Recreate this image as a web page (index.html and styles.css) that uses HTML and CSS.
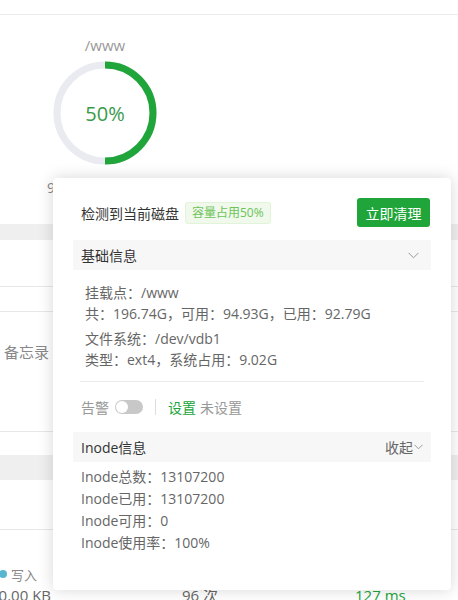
FILE: index.html
```html
<!DOCTYPE html>
<html lang="zh-CN">
<head>
<meta charset="utf-8">
<title>磁盘详情</title>
<link rel="stylesheet" href="styles.css">
</head>
<body>
<div class="page">
  <div class="topbar"></div>
  <div class="chart">
    <div class="chart-title">/www</div>
    <div class="ring">
      <svg width="110" height="110" viewBox="0 0 110 110">
        <circle cx="55" cy="55" r="48" fill="none" stroke="#eaebf1" stroke-width="7"/>
        <path d="M55 7 A48 48 0 0 1 55 103" fill="none" stroke="#20a53a" stroke-width="7"/>
      </svg>
      <span class="ring-label">50%</span>
    </div>
    <div class="chart-sub">92.79G / 196.74G</div>
  </div>
  <div class="band"></div>
  <div class="row row-a"></div>
  <div class="row row-b"></div>
  <div class="row row-c"><span class="memo">备忘录</span></div>
  <div class="row row-d"></div>
  <div class="band band-2"></div>
  <div class="row row-e"></div>
  <div class="stats">
    <div class="legend"><span class="dot"></span>写入</div>
    <div class="stat-values">
      <span class="v1">20.00 KB</span>
      <span class="v2">96 次</span>
      <span class="v3">127 ms</span>
    </div>
  </div>
</div>

<div class="popup">
  <div class="pop-head">
    <div class="pop-title">
      <span class="title-text">检测到当前磁盘</span>
      <span class="tag">容量占用50%</span>
    </div>
    <button class="btn">立即清理</button>
  </div>

  <div class="bar">
    <span>基础信息</span>
    <svg class="chev" width="11" height="7" viewBox="0 0 11 7"><path d="M0.5 0.8 L5.5 5.8 L10.5 0.8" fill="none" stroke="#999" stroke-width="1"/></svg>
  </div>
  <div class="info">
    <div class="group">
      <div>挂载点：/www</div>
      <div>共：196.74G，可用：94.93G，已用：92.79G</div>
    </div>
    <div class="group">
      <div>文件系统：/dev/vdb1</div>
      <div>类型：ext4，系统占用：9.02G</div>
    </div>
  </div>
  <div class="divider"></div>
  <div class="alert">
    <span class="muted">告警</span>
    <span class="toggle"><span class="knob"></span></span>
    <span class="vline"></span>
    <span class="link">设置</span>
    <span class="muted">未设置</span>
  </div>
  <div class="bar">
    <span>Inode信息</span>
    <span class="collapse">收起<svg class="chev-s" width="9" height="6" viewBox="0 0 9 6"><path d="M0.5 0.8 L4.5 4.8 L8.5 0.8" fill="none" stroke="#999" stroke-width="1"/></svg></span>
  </div>
  <div class="inode">
    <div>Inode总数：13107200</div>
    <div>Inode已用：13107200</div>
    <div>Inode可用：0</div>
    <div>Inode使用率：100%</div>
  </div>
</div>
</body>
</html>
```

FILE: styles.css
```css
html, body {
  margin: 0;
  padding: 0;
  background: #fff;
}
body {
  width: 458px;
  height: 600px;
  overflow: hidden;
  position: relative;
  font-family: "Open Sans", "Noto Sans CJK SC", sans-serif;
  font-size: 14px;
  color: #666;
}
.page {
  display: flex;
  flex-direction: column;
}
.topbar {
  height: 14px;
  border-bottom: 1px solid #ececec;
}
.chart {
  height: 209px;
  width: 210px;
  display: flex;
  flex-direction: column;
  align-items: center;
}
.chart-title {
  margin-top: 20px;
  font-size: 15px;
  line-height: 20px;
  color: #999;
}
.ring {
  position: relative;
  width: 110px;
  height: 110px;
  margin-top: 3px;
}
.ring svg {
  display: block;
}
.ring-label {
  position: absolute;
  inset: 0;
  display: flex;
  align-items: center;
  justify-content: center;
  font-size: 20px;
  color: #3a9a4a;
}
.chart-sub {
  align-self: flex-start;
  padding-left: 47px;
  margin-top: 10px;
  font-size: 14px;
  line-height: 20px;
  color: #888;
  white-space: nowrap;
}
.band {
  height: 16px;
  background: #efefef;
}
.band-2 {
  height: 25px;
}
.row {
  border-bottom: 1px solid #e8e8e8;
}
.row-a { height: 46px; }
.row-b { height: 24px; }
.row-c {
  height: 119px;
  display: flex;
  align-items: flex-start;
}
.row-d { height: 23px; border-bottom: none; }
.row-e { height: 49px; }
.memo {
  margin-top: 29px;
  padding-left: 4px;
  font-size: 15px;
  color: #888;
}
.stats {
  padding-top: 36px;
}
.legend {
  display: flex;
  align-items: center;
  font-size: 13px;
  color: #888;
  height: 16px;
}
.dot {
  width: 8px;
  height: 8px;
  border-radius: 50%;
  background: #5ab6cf;
  margin-left: -1px;
  margin-right: 4px;
}
.stat-values {
  display: flex;
  font-size: 15px;
  color: #666;
  margin-top: 3px;
  line-height: 20px;
}
.v1 { margin-left: -10px; width: 192px; }
.v2 { width: 173px; }
.v3 { color: #20a53a; }

/* popup */
.popup {
  position: absolute;
  left: 53px;
  top: 178px;
  width: 398px;
  height: 412px;
  box-sizing: border-box;
  padding: 20px 20px;
  background: #fff;
  border-radius: 4px;
  box-shadow: 0 0 16px rgba(0, 0, 0, 0.16);
}
.pop-head {
  display: flex;
  align-items: center;
  justify-content: space-between;
  height: 29px;
}
.pop-title {
  display: flex;
  align-items: center;
  padding-left: 8px;
}
.title-text {
  color: #333;
}
.tag {
  margin-left: 6px;
  height: 20px;
  line-height: 20px;
  padding: 0 6px;
  font-size: 12px;
  color: #6cc35a;
  background: #f0f9eb;
  border: 1px solid #e1f3d8;
  border-radius: 3px;
}
.btn {
  width: 73px;
  height: 29px;
  margin-right: 1px;
  border: none;
  border-radius: 3px;
  background: #20a53a;
  color: #fff;
  font-family: inherit;
  font-size: 14px;
  padding: 0;
}
.bar {
  margin-top: 13px;
  height: 30px;
  background: #f7f7f7;
  display: flex;
  align-items: center;
  justify-content: space-between;
  padding: 0 8px;
  color: #333;
}
.chev {
  margin-right: 4px;
}
.info {
  padding: 12px 0 0 12px;
  line-height: 21px;
}
.group + .group {
  margin-top: 4px;
}
.divider {
  margin: 11px 7px 0 7px;
  height: 1px;
  background: #ebebeb;
}
.alert {
  margin-top: 11px;
  height: 28px;
  display: flex;
  align-items: center;
  padding-left: 8px;
}
.muted {
  color: #999;
}
.toggle {
  position: relative;
  width: 28px;
  height: 14px;
  border-radius: 7px;
  background: #c8c8c8;
  margin-left: 6px;
}
.knob {
  position: absolute;
  left: 1px;
  top: 1px;
  width: 12px;
  height: 12px;
  border-radius: 50%;
  background: #fff;
}
.vline {
  width: 1px;
  height: 16px;
  background: #ddd;
  margin: 0 12px;
}
.link {
  color: #20a53a;
  margin-right: 4px;
}
.alert + .bar {
  margin-top: 11px;
}
.collapse {
  display: flex;
  align-items: center;
  color: #666;
}
.chev-s {
  margin-left: 1px;
}
.inode {
  padding: 4px 0 0 8px;
  line-height: 22px;
}
```
